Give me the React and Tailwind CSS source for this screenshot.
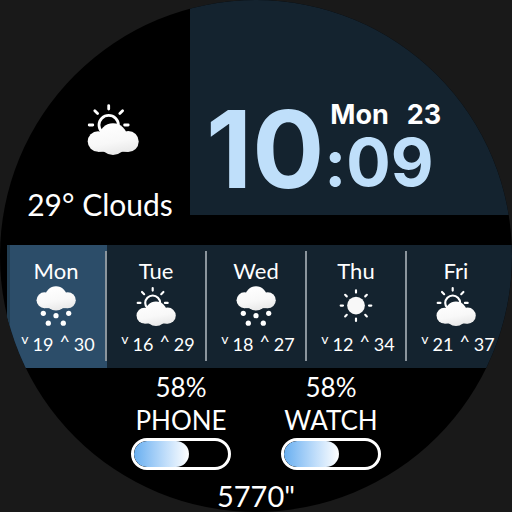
const forecast = [
  { day: "Mon", icon: "snow", low: 19, high: 30, today: true },
  { day: "Tue", icon: "partly", low: 16, high: 29 },
  { day: "Wed", icon: "snow", low: 18, high: 27 },
  { day: "Thu", icon: "sun", low: 12, high: 34 },
  { day: "Fri", icon: "partly", low: 21, high: 37 },
];

const batteries = [
  { label: "PHONE", level: 58 },
  { label: "WATCH", level: 58 },
];

function Cloud() {
  return (
    <g fill="url(#cloud-shade)">
      <circle cx="11" cy="38.5" r="10.3" />
      <circle cx="41.2" cy="38.5" r="10.5" />
      <circle cx="26" cy="34.5" r="14.2" />
      <ellipse cx="26" cy="42" rx="12" ry="10" />
      <rect x="11" y="30" width="30" height="18.8" />
    </g>
  );
}

function WeatherIcon({ kind, className }) {
  return (
    <svg viewBox="0 0 52 52" className={className} aria-hidden="true">
      <defs>
        <linearGradient id="cloud-shade" gradientUnits="userSpaceOnUse" x1="22" y1="20" x2="28" y2="52">
          <stop offset="0" stopColor="#ffffff" />
          <stop offset="0.6" stopColor="#f8f8f8" />
          <stop offset="1" stopColor="#e8e8e8" />
        </linearGradient>
      </defs>
      {kind === "partly" && (
        <>
          <g fill="none" stroke="#fff" strokeWidth="2.8" strokeLinecap="round">
            <circle cx="21.7" cy="22" r="9.7" />
            <path d="M21.7 2.6V6M7.8 7.8L10.6 10.6M35.6 7.8L32.8 10.6M2.2 22H5.8M37.6 22H41.2" />
          </g>
          <Cloud />
        </>
      )}
      {kind === "snow" && (
        <>
          <g transform="translate(0 -20)">
            <Cloud />
          </g>
          <g fill="#fff">
            <circle cx="9.5" cy="35.5" r="3.4" />
            <circle cx="26" cy="38.6" r="3.4" />
            <circle cx="42.5" cy="35.5" r="3.4" />
            <circle cx="16" cy="48.4" r="3.4" />
            <circle cx="35.5" cy="48.4" r="3.4" />
          </g>
        </>
      )}
      {kind === "sun" && (
        <>
          <circle cx="26" cy="25.5" r="11.5" fill="#f8f8f8" />
          <path
            d="M26 5.6V8.6M26 42.4V45.4M6.1 25.5H9.1M42.9 25.5H45.9M11.9 11.4L14 13.5M38 37.5L40.1 39.6M40.1 11.4L38 13.5M14 37.5L11.9 39.6"
            fill="none"
            stroke="#fff"
            strokeWidth="2.8"
            strokeLinecap="round"
          />
        </>
      )}
    </svg>
  );
}

function Day({ day, icon, low, high, today, last }) {
  return (
    <li className={`flex pt-[6px] pb-[7px] ${today ? "bg-[#2c4d69] shadow-[inset_3px_0_0_#213c50]" : ""}`}>
      <div
        className={`flex flex-1 flex-col items-center border-r-2 pt-[8px] pb-[7px] ${
          last ? "border-transparent" : "border-[#8b959d]"
        }`}
      >
        <span className="text-[22px] leading-[24px]">{day}</span>
        <WeatherIcon kind={icon} className="mt-[3px] size-10" />
        <div className="mt-[8px] flex items-start gap-1 pl-1 text-[18px] leading-[20px]">
          <span className="text-[14px] leading-[10px]">v</span>
          <span>{low}</span>
          <span className="pl-0.5 leading-[14px]">^</span>
          <span>{high}</span>
        </div>
      </div>
    </li>
  );
}

function Battery({ label, level }) {
  return (
    <div className="flex w-[100px] flex-col items-center text-[26px]">
      <span className="leading-[32px]">{level}%</span>
      <span className="leading-[34px]">{label}</span>
      <div
        role="meter"
        aria-label={label}
        aria-valuenow={level}
        aria-valuemin={0}
        aria-valuemax={100}
        className="mt-px h-8 w-full overflow-hidden rounded-full border-3 border-white"
      >
        <div
          className="h-full rounded-full bg-linear-to-r from-[#68aff0] to-white"
          style={{ width: `${level}%` }}
        />
      </div>
    </div>
  );
}

export default function App() {
  return (
    <div className="flex min-h-screen items-start justify-center bg-[#191919] font-[Lato,sans-serif] text-white">
      <main className="aspect-square w-full max-w-lg overflow-hidden rounded-full bg-black">
        <div className="flex items-start">
          <section className="flex w-[190px] flex-col items-center pt-[103px] pl-[10px]">
            <WeatherIcon kind="partly" className="ml-[26px] size-[52px]" />
            <p className="mt-[30px] text-[30px] leading-[38px] whitespace-nowrap">29° Clouds</p>
          </section>
          <section className="flex flex-1 items-start bg-[#14232f] pt-[104px] pb-[27px] pl-4 font-[Inter,sans-serif] font-bold">
            <span className="pt-[6px] text-[107px] leading-[78px] text-[#bfdffa]">10</span>
            <div className="flex flex-col">
              <p className="flex gap-[18px] pl-1.5 text-[27px] leading-[22px]">
                <span>Mon</span>
                <span>23</span>
              </p>
              <span className="mt-[12px] text-[66px] leading-[48px] text-[#bfdffa] [font-feature-settings:'calt'_0]">
                :09
              </span>
            </div>
          </section>
        </div>

        <ul className="mt-[22px] ml-[7px] grid grid-cols-5 bg-[#14232f] pr-[5px]">
          {forecast.map((d, i) => (
            <Day key={d.day} {...d} last={i === forecast.length - 1} />
          ))}
        </ul>

        <section className="mt-[3px] flex justify-center gap-[50px]">
          {batteries.map((b) => (
            <Battery key={b.label} {...b} />
          ))}
        </section>

        <p className="mt-[11px] text-center text-[29px] leading-[30px]">5770"</p>
      </main>
    </div>
  );
}
